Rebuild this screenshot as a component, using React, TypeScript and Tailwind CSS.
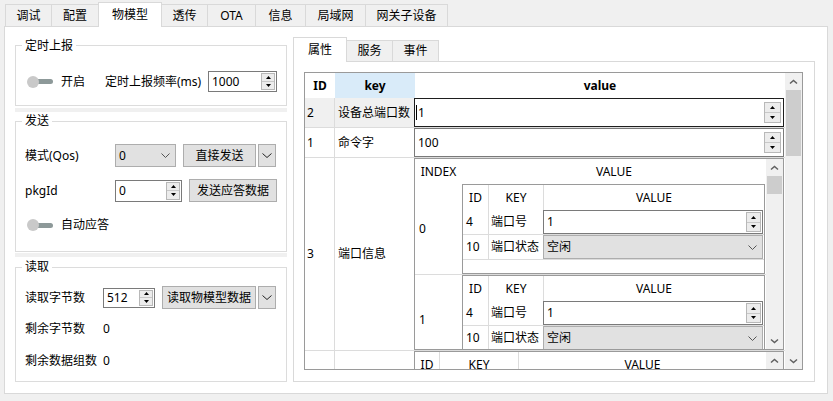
import React from "react";

const FONT = "font-['Noto_Sans','Noto_Sans_CJK_SC',sans-serif]";

function Tri({ up }: { up?: boolean }) {
  return (
    <svg width="5" height="3" viewBox="0 0 5 3">
      {up ? <polygon points="2.5,0 5,3 0,3" fill="#000" /> : <polygon points="0,0 5,0 2.5,3" fill="#000" />}
    </svg>
  );
}

function SpinArrows({ cls }: { cls: string }) {
  return (
    <div className={`flex flex-col border border-[#b8b8b8] bg-[#ececec] ${cls}`}>
      <div className="flex-1 flex items-center justify-center border-b border-[#c8c8c8]">
        <Tri up />
      </div>
      <div className="flex-1 flex items-center justify-center">
        <Tri />
      </div>
    </div>
  );
}

function SpinBox({
  value,
  cls,
  arrows,
  caret,
}: {
  value: string;
  cls: string;
  arrows: string;
  caret?: boolean;
}) {
  return (
    <div className={`flex items-center bg-white border ${cls}`}>
      {caret ? <span className="ml-[1px] w-[1px] h-[15px] bg-black" /> : null}
      <span className={caret ? "flex-1 pl-[1px]" : "flex-1 pl-[3px]"}>{value}</span>
      <SpinArrows cls={arrows} />
    </div>
  );
}

function Chev({ down, color }: { down?: boolean; color?: string }) {
  return (
    <svg width="9" height="6" viewBox="0 0 9 6">
      <polyline
        points={down ? "1,1.5 4.5,4.5 8,1.5" : "1,4.5 4.5,1.5 8,4.5"}
        fill="none"
        stroke={color || "#606060"}
        strokeWidth="1.5"
      />
    </svg>
  );
}

function ComboChev() {
  return (
    <svg width="9" height="5" viewBox="0 0 9 5">
      <polyline points="0.5,0.5 4.5,4.5 8.5,0.5" fill="none" stroke="#555" strokeWidth="1" />
    </svg>
  );
}

function Combo({ text, cls }: { text: string; cls: string }) {
  return (
    <div className={`flex items-center justify-between border border-[#adadad] bg-[#e1e1e1] pl-[3px] pr-[5px] ${cls}`}>
      <span>{text}</span>
      <ComboChev />
    </div>
  );
}

function Btn({ children, cls }: { children: React.ReactNode; cls: string }) {
  return (
    <div className={`flex items-center justify-center border border-[#adadad] bg-[#e1e1e1] ${cls}`}>{children}</div>
  );
}

function DropBtn({ cls }: { cls: string }) {
  return (
    <div className={`flex items-center justify-center border border-[#adadad] bg-[#e1e1e1] ${cls}`}>
      <svg width="10" height="5" viewBox="0 0 10 5">
        <polyline points="0.5,0.5 5,4.5 9.5,0.5" fill="none" stroke="#222" strokeWidth="1" />
      </svg>
    </div>
  );
}

function Toggle() {
  return (
    <div className="flex items-center w-[26px] h-[12px]">
      <div className="relative z-10 w-[12px] h-[12px] rounded-full bg-[#c9c9c9] shrink-0" />
      <div className="-ml-[7px] w-[21px] h-[5px] rounded-r-full bg-[#8d9999] shrink-0" />
    </div>
  );
}

function GroupBox({
  title,
  cls,
  titleCls,
  children,
}: {
  title: string;
  cls: string;
  titleCls: string;
  children: React.ReactNode;
}) {
  return (
    <div className={`relative w-[272px] border border-[#dcdcdc] ${cls}`}>
      <span className={`absolute left-[6px] px-[3px] bg-white leading-[16px] ${titleCls}`}>{title}</span>
      {children}
    </div>
  );
}

function TopTabs() {
  const tabs: { t: string; cls: string }[] = [
    { t: "调试", cls: "w-[46px] h-[22px] border-l border-t bg-[#f0f0f0]" },
    { t: "配置", cls: "w-[47px] h-[22px] border-l border-t bg-[#f0f0f0]" },
    { t: "物模型", cls: "w-[64px] h-[25px] -mb-[1px] border-l border-r border-t bg-white" },
    { t: "透传", cls: "w-[45px] h-[22px] border-t bg-[#f0f0f0]" },
    { t: "OTA", cls: "w-[48px] h-[22px] border-l border-t bg-[#f0f0f0]" },
    { t: "信息", cls: "w-[50px] h-[22px] border-l border-t bg-[#f0f0f0]" },
    { t: "局域网", cls: "w-[60px] h-[22px] border-l border-t bg-[#f0f0f0]" },
    { t: "网关子设备", cls: "w-[83px] h-[22px] border-l border-r border-t bg-[#f0f0f0]" },
  ];
  return (
    <div className="relative z-10 h-[26px] pl-[5px] flex items-end">
      {tabs.map((x) => (
        <div key={x.t} className={`flex items-center justify-center border-[#d9d9d9] ${x.cls}`}>
          {x.t}
        </div>
      ))}
    </div>
  );
}

function LeftColumn() {
  return (
    <div className="w-[288px] shrink-0 pl-[10px] pt-[18px] flex flex-col">
      <GroupBox title="定时上报" cls="h-[61px]" titleCls="top-[-8px]">
        <div className="mt-[25px] pl-[11px] flex items-center h-[21px]">
          <Toggle />
          <span className="ml-[8px] w-[44px]">开启</span>
          <span className="w-[103px]">定时上报频率(ms)</span>
          <SpinBox value="1000" cls="w-[69px] h-[21px] border-[#7a7a7a]" arrows="w-[14px] self-stretch my-[1px] mr-[1px]" />
        </div>
      </GroupBox>
      <div className="mt-[2px] h-[4px] w-[272px] bg-[#f0f0f0]" />
      <GroupBox title="发送" cls="mt-[9px] h-[131px]" titleCls="top-[-9px]">
        <div className="mt-[22px] pl-[9px] flex items-center h-[23px]">
          <span className="w-[90px]">模式(Qos)</span>
          <Combo text="0" cls="w-[61px] h-[23px]" />
          <Btn cls="ml-[7px] w-[73px] h-[23px]">直接发送</Btn>
          <DropBtn cls="ml-[2px] w-[18px] h-[23px]" />
        </div>
        <div className="mt-[12px] pl-[9px] flex items-center h-[23px]">
          <span className="w-[90px]">pkgId</span>
          <SpinBox value="0" cls="w-[67px] h-[22px] border-[#7a7a7a]" arrows="w-[14px] self-stretch my-[1px] mr-[1px]" />
          <Btn cls="ml-[7px] w-[88px] h-[23px]">发送应答数据</Btn>
        </div>
        <div className="mt-[17px] pl-[11px] flex items-center h-[12px]">
          <Toggle />
          <span className="ml-[8px]">自动应答</span>
        </div>
      </GroupBox>
      <div className="mt-[1px] h-[4px] w-[272px] bg-[#f0f0f0]" />
      <GroupBox title="读取" cls="mt-[10px] h-[115px]" titleCls="top-[-9px]">
        <div className="mt-[18px] pl-[9px] flex items-center h-[23px]">
          <span className="w-[78px]">读取字节数</span>
          <SpinBox value="512" cls="w-[52px] h-[20px] border-[#7a7a7a]" arrows="w-[14px] self-stretch my-[1px] mr-[1px]" />
          <Btn cls="ml-[7px] w-[94px] h-[23px]">读取物模型数据</Btn>
          <DropBtn cls="ml-[2px] w-[18px] h-[23px]" />
        </div>
        <div className="mt-[12px] pl-[9px] flex items-center h-[16px]">
          <span className="w-[78px]">剩余字节数</span>
          <span>0</span>
        </div>
        <div className="mt-[16px] pl-[9px] flex items-center h-[16px]">
          <span className="w-[78px]">剩余数据组数</span>
          <span>0</span>
        </div>
      </GroupBox>
    </div>
  );
}

function InnerTable() {
  return (
    <div className="w-[303px] h-[90px] shrink-0 border border-[#9a9a9a] flex flex-col bg-white">
      <div className="h-[25px] flex shrink-0">
        <div className="w-[26px] border-r border-[#dcdcdc] flex items-center justify-center">ID</div>
        <div className="w-[55px] border-r border-[#dcdcdc] flex items-center justify-center">KEY</div>
        <div className="w-[220px] flex items-center justify-center">VALUE</div>
      </div>
      <div className="h-[25px] flex shrink-0 border-b border-[#dcdcdc]">
        <div className="w-[26px] border-r border-[#dcdcdc] flex items-center pl-[3px]">4</div>
        <div className="w-[55px] border-r border-[#dcdcdc] flex items-center pl-[2px]">端口号</div>
        <div className="w-[220px] flex items-start">
          <SpinBox value="1" cls="-ml-[1px] w-[220px] h-[24px] border-[#7a7a7a]" arrows="w-[15px] self-stretch my-[1px] mr-[1px]" />
        </div>
      </div>
      <div className="h-[25px] flex shrink-0 border-b border-[#dcdcdc]">
        <div className="w-[26px] border-r border-[#dcdcdc] flex items-center pl-[3px]">10</div>
        <div className="w-[55px] border-r border-[#dcdcdc] flex items-center pl-[2px]">端口状态</div>
        <div className="w-[220px] flex items-start">
          <Combo text="空闲" cls="-ml-[1px] w-[220px] h-[24px]" />
        </div>
      </div>
    </div>
  );
}

function MiddleRow({ idx }: { idx: string }) {
  return (
    <div className="h-[91px] shrink-0 flex border-b border-[#dcdcdc]">
      <div className="w-[47px] flex items-center pl-[4px]">{idx}</div>
      <div className="w-[304px] flex items-start">
        <InnerTable />
      </div>
    </div>
  );
}

function ScrollBar({ thumbCls }: { thumbCls: string }) {
  return (
    <div className="w-[17px] shrink-0 bg-[#f0f0f0] flex flex-col">
      <div className="h-[17px] flex items-center justify-center shrink-0">
        <Chev />
      </div>
      <div className={`mx-[1px] bg-[#cdcdcd] shrink-0 ${thumbCls}`} />
      <div className="flex-1" />
      <div className="h-[17px] flex items-center justify-center shrink-0">
        <Chev down />
      </div>
    </div>
  );
}

function MiddleTable() {
  return (
    <div className="-ml-[1px] w-[370px] h-[192px] border border-[#9a9a9a] flex bg-white">
      <div className="w-[351px] flex flex-col overflow-hidden">
        <div className="h-[25px] shrink-0 flex">
          <div className="w-[47px] flex items-center justify-center">INDEX</div>
          <div className="w-[304px] flex items-center justify-center">VALUE</div>
        </div>
        <MiddleRow idx="0" />
        <MiddleRow idx="1" />
      </div>
      <ScrollBar thumbCls="h-[18px]" />
    </div>
  );
}

function BottomTable() {
  return (
    <div className="-ml-[1px] w-[370px] h-[40px] border-l border-r border-t border-[#9a9a9a] flex bg-white">
      <div className="w-[351px] flex h-[25px]">
        <div className="w-[25px] border-r border-[#dcdcdc] flex items-center justify-center">ID</div>
        <div className="w-[79px] border-r border-[#dcdcdc] flex items-center justify-center">KEY</div>
        <div className="w-[247px] flex items-center justify-center">VALUE</div>
      </div>
      <div className="w-[17px] bg-[#f0f0f0] flex flex-col">
        <div className="h-[17px] flex items-center justify-center">
          <Chev />
        </div>
      </div>
    </div>
  );
}

function OuterTable() {
  return (
    <div className="w-[499px] h-[298px] border border-[#9a9a9a] flex overflow-hidden bg-white">
      <div className="w-[480px] flex flex-col overflow-hidden">
        <div className="h-[25px] shrink-0 flex font-bold">
          <div className="w-[30px] flex items-center justify-center">ID</div>
          <div className="w-[80px] bg-[#d9ebf9] flex items-center justify-center">key</div>
          <div className="w-[370px] flex items-center justify-center">value</div>
        </div>
        <div className="h-[30px] shrink-0 flex border-b border-[#dcdcdc]">
          <div className="w-[30px] bg-[#f0f0f0] border-r border-[#dcdcdc] flex items-center pl-[2px]">2</div>
          <div className="w-[80px] bg-[#f0f0f0] border-r border-[#dcdcdc] flex items-center pl-[3px]">设备总端口数</div>
          <div className="w-[370px] flex items-start">
            <SpinBox value="1" caret cls="-ml-[1px] w-[370px] h-[29px] border-[#1e1e1e]" arrows="w-[17px] h-[21px] mr-[2px]" />
          </div>
        </div>
        <div className="h-[30px] shrink-0 flex border-b border-[#dcdcdc]">
          <div className="w-[30px] border-r border-[#dcdcdc] flex items-center pl-[2px]">1</div>
          <div className="w-[80px] border-r border-[#dcdcdc] flex items-center pl-[3px]">命令字</div>
          <div className="w-[370px] flex items-start">
            <SpinBox value="100" cls="-ml-[1px] w-[370px] h-[29px] border-[#7a7a7a]" arrows="w-[17px] h-[21px] mr-[2px]" />
          </div>
        </div>
        <div className="h-[193px] shrink-0 flex border-b border-[#dcdcdc]">
          <div className="w-[30px] border-r border-[#dcdcdc] flex items-center pl-[2px]">3</div>
          <div className="w-[80px] border-r border-[#dcdcdc] flex items-center pl-[3px]">端口信息</div>
          <div className="w-[370px] flex items-start">
            <MiddleTable />
          </div>
        </div>
        <div className="flex-1 flex">
          <div className="w-[30px] border-r border-[#dcdcdc]" />
          <div className="w-[80px] border-r border-[#dcdcdc]" />
          <div className="w-[370px] flex items-start">
            <BottomTable />
          </div>
        </div>
      </div>
      <ScrollBar thumbCls="h-[66px]" />
    </div>
  );
}

function RightColumn() {
  return (
    <div className="mt-[10px] w-[522px] shrink-0 flex flex-col">
      <div className="relative z-10 h-[24px] flex items-end">
        <div className="w-[54px] h-[25px] -mb-[1px] border-l border-r border-t border-[#d9d9d9] bg-white flex items-center justify-center">
          属性
        </div>
        <div className="w-[45px] h-[21px] border-t border-[#d9d9d9] bg-[#f0f0f0] flex items-center justify-center">
          服务
        </div>
        <div className="w-[47px] h-[21px] border-l border-r border-t border-[#d9d9d9] bg-[#f0f0f0] flex items-center justify-center">
          事件
        </div>
      </div>
      <div className="h-[321px] border border-[#d9d9d9] bg-white pl-[10px] pt-[10px]">
        <OuterTable />
      </div>
    </div>
  );
}

export default function App() {
  return (
    <div className={`w-[833px] h-[401px] bg-[#f0f0f0] overflow-hidden text-[12px] leading-[16px] text-black ${FONT}`}>
      <TopTabs />
      <div className="ml-[4px] w-[824px] h-[368px] border border-[#d9d9d9] bg-white flex">
        <LeftColumn />
        <RightColumn />
      </div>
    </div>
  );
}
